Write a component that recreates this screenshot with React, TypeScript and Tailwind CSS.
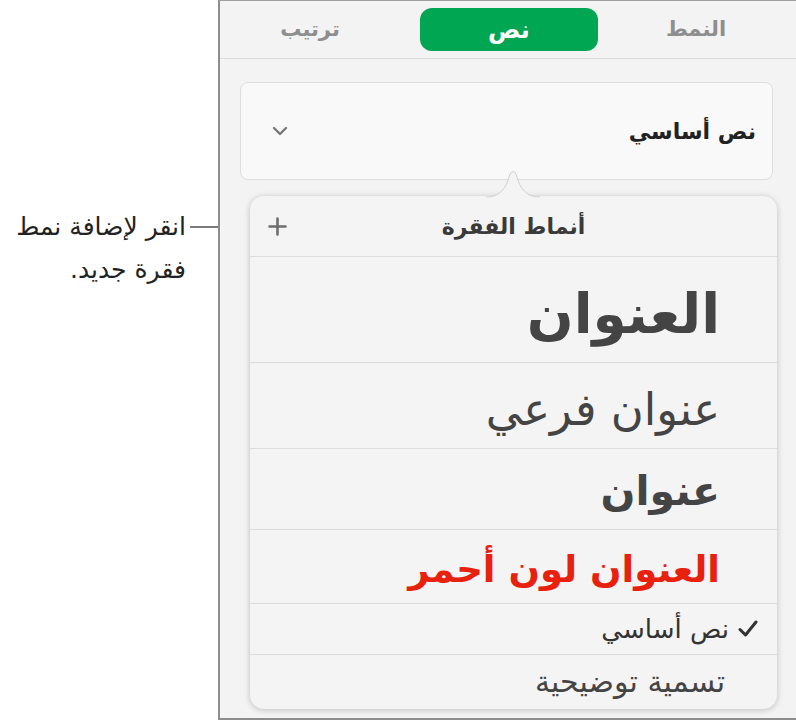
import React from "react";

const rows = [
  { text: "العنوان", cls: "h-[106px] pt-[10px] text-[55px] font-bold text-[#444]" },
  { text: "عنوان فرعي", cls: "h-[86px] pt-[8px] text-[45px] text-[#444]" },
  { text: "عنوان", cls: "h-[81px] pt-[5px] text-[41px] font-bold text-[#444]" },
  { text: "العنوان لون أحمر", cls: "h-[74px] pt-[6px] text-[37px] font-bold text-[#e8210f]" },
];

const App = () => {
  return (
    <div
      dir="ltr"
      className="relative flex w-[796px] h-[721px] bg-white font-['DejaVu_Sans',sans-serif] text-[#3a3a3a]"
    >
      {/* callout */}
      <div className="w-[218px] shrink-0 pt-[205px] relative">
        <div dir="rtl" className="w-[186px] text-right text-[25px] leading-[43px] text-[#222]">
          <p>انقر لإضافة نمط</p>
          <p>فقرة جديد.</p>
        </div>
        <div className="absolute left-[190px] top-[226px] w-[74px] h-[2px] bg-[#7a7a7a]" />
      </div>

      {/* panel */}
      <div className="relative w-[578px] h-[720px] border-t border-l-2 border-b-2 border-[#8d8d8d] border-t-[#a0a0a0] bg-[#f3f3f3]">
        {/* tabs */}
        <div className="flex items-center h-[58px] border-b border-[#dcdcdc] text-[21px] font-bold">
          <div className="ml-[20px] w-[140px] text-center text-[#8e8e8e]">ترتيب</div>
          <div className="ml-[40px] w-[178px] h-[43px] rounded-[12px] bg-[#00a651] text-white flex items-center justify-center text-[24px]">
            نص
          </div>
          <div className="ml-[32px] w-[132px] text-center text-[#8e8e8e]">النمط</div>
        </div>

        {/* dropdown */}
        <div className="mt-[23px] ml-[20px] w-[533px] h-[98px] rounded-[8px] border border-[#dedede] bg-[#f9f9f9] flex items-center justify-between pl-[30px] pr-[16px]">
          <svg width="18" height="12" viewBox="0 0 18 12">
            <path d="M3 3 L9 9 L15 3" fill="none" stroke="#777" strokeWidth="2.4" strokeLinecap="round" strokeLinejoin="round" />
          </svg>
          <span dir="rtl" className="text-[22px] font-bold text-[#222]">نص أساسي</span>
        </div>

        {/* popover */}
        <div className="relative mt-[16px] ml-[30px] w-[527px] h-[513px] rounded-[14px] bg-[#f4f4f4] shadow-[0_1px_6px_rgba(0,0,0,0.22)]">
          <svg
            className="absolute left-[236px] top-[-27px]"
            width="54"
            height="30"
            viewBox="0 0 54 30"
          >
            <path
              d="M0 28 C12 28 17 22 21 14 L24 5 Q27 0 30 5 L33 14 C37 22 42 28 54 28 L54 30 L0 30 Z"
              fill="#f4f4f4"
              stroke="#cfcfcf"
              strokeWidth="1"
            />
            <rect x="0" y="28.5" width="54" height="2" fill="#f4f4f4" />
          </svg>

          <div className="relative flex items-center justify-center h-[61px] border-b border-[#dcdcdc]">
            <svg className="absolute left-[18px] top-[21px]" width="19" height="19" viewBox="0 0 19 19">
              <path d="M9.5 1.5 V17.5 M1.5 9.5 H17.5" stroke="#6e6e6e" strokeWidth="2.6" strokeLinecap="round" />
            </svg>
            <span dir="rtl" className="text-[22px] font-bold text-[#3a3a3a]">أنماط الفقرة</span>
          </div>

          {rows.map((r, i) => (
            <div
              key={i}
              dir="rtl"
              className={`flex items-center pr-[57px] border-b border-[#dcdcdc] ${r.cls}`}
            >
              {r.text}
            </div>
          ))}

          <div dir="rtl" className="flex items-center h-[51px] pr-[19px] border-b border-[#dcdcdc] text-[26px] text-[#333]">
            <svg width="20" height="18" viewBox="0 0 20 18" className="ml-[9px]">
              <path d="M2 9.5 L7.5 15 L18 2" fill="none" stroke="#333" strokeWidth="3" strokeLinecap="round" strokeLinejoin="round" />
            </svg>
            <span>نص أساسي</span>
          </div>

          <div dir="rtl" className="flex items-center h-[52px] pr-[52px] text-[30px] text-[#444]">
            تسمية توضيحية
          </div>
        </div>
      </div>
    </div>
  );
};

export default App;
